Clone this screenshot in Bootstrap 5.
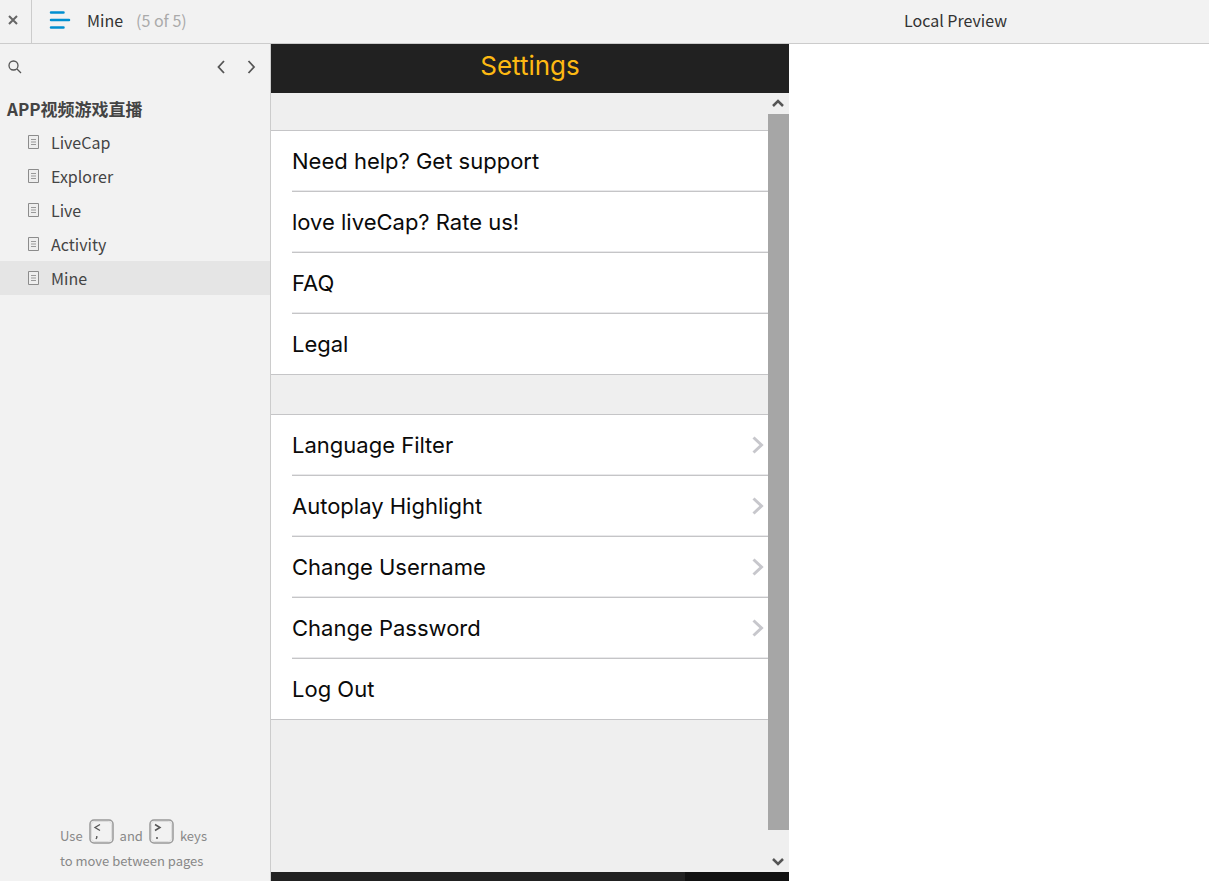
<!DOCTYPE html>
<html lang="en">
<head>
<meta charset="utf-8">
<meta name="viewport" content="width=device-width, initial-scale=1">
<title>Mine</title>
<link href="https://cdn.jsdelivr.net/npm/bootstrap@5.3.0/dist/css/bootstrap.min.css" rel="stylesheet">
<style>
  body { font-family: "Noto Sans CJK SC", sans-serif; font-size: 16px; line-height: 24px; color: #444; background: #fff; }
  svg { display: block; fill: none; }
  button { border: 0; background: none; padding: 0; color: inherit; }
  .topbar { height: 44px; background: #f2f2f2; border-bottom: 1px solid #ccc; padding-bottom: 3px; }
  .close-btn { width: 32px; height: 43px; padding: 0 0 3px 8px; border-right: 1px solid #ccc; color: #666; }
  .page-title { color: #333; padding-left: 15px; }
  .page-count { color: #aaa; margin-left: 13px; }
  .preview-label { color: #333; margin-right: 202px; }
  .sidebar { width: 271px; background: #f2f2f2; border-right: 1px solid #ccc; }
  .sidebar-tools { height: 45px; padding: 0 12px 0 8px; color: #555; }
  .project-name { font-size: 17px; font-weight: 700; line-height: 32px; padding: 4px 0 0 7px; }
  .page-link-row { height: 34px; padding-left: 28px; gap: 12px; color: #444; text-decoration: none; }
  .page-link-row.active { background: #e5e5e5; }
  .hint { font-size: 13px; line-height: 25px; color: #888; padding: 0 0 8px 60px; }
  .key-cap { width: 25px; height: 25px; margin: 0 6px; color: #555; }
  .phone { width: 518px; font-family: Inter, sans-serif; background: #efefef; }
  .phone-head { height: 49px; background: #212121; color: #fdb913; font-size: 26px; line-height: 44px; }
  .phone-foot { height: 9px; background: #212121; }
  .foot-tab { width: 104px; background: #111; }
  .settings-group { background: #fff; border-top: 1px solid #c5c5c7; border-bottom: 1px solid #c5c5c7; color: #0a0a0a; font-size: 22px; line-height: 28px; padding-left: 21px; }
  .settings-row { height: 61px; padding-right: 4px; text-align: left; border-bottom: 1px solid #c5c5c7; box-shadow: inset 0 -1px #e9e9eb; color: inherit; }
  .settings-row:last-child { height: 60px; border-bottom: 0; box-shadow: none; }
  .group-first { margin-top: 37px; }
  .group-next { margin-top: 39px; }
  .scroll-track { width: 21px; background: #efefef; }
  .scroll-end { height: 21px; padding-right: 2px; }
  .scroll-thumb { background: #a6a6a6; margin-bottom: 21px; }
</style>
</head>
<body class="d-flex flex-column vh-100 overflow-hidden">
<svg class="d-none" aria-hidden="true">
  <symbol id="doc" viewBox="0 0 11 14"><path d="M.5.5h10v13H.5z" fill="#eee" stroke="#8c8c8c"/><path d="M3 4.500h5M3 7h5M3 9.500h5" stroke="#999"/></symbol>
  <symbol id="chev" viewBox="0 0 12 18"><path d="M1.500 1.500 9.500 9l-8 7.500" stroke="#c7c7cc" stroke-width="3"/></symbol>
</svg>
<header class="topbar d-flex flex-shrink-0">
  <button class="close-btn d-flex align-items-center" aria-label="Close"><svg width="10" height="10" stroke="currentColor" stroke-width="2"><path d="M1 1l8 8M9 1 1 9"/></svg></button>
  <button class="d-flex align-items-center ms-3" aria-label="Pages"><svg width="24" height="20" stroke="#008fd0" stroke-width="2.500" stroke-linecap="round"><path d="M3 2.500h12.500M3 10h18M3 17.500h12.500"/></svg></button>
  <span class="page-title align-self-center">Mine</span>
  <span class="page-count align-self-center">(5 of 5)</span>
  <span class="preview-label align-self-center ms-auto">Local Preview</span>
</header>
<div class="d-flex flex-grow-1 overflow-hidden">
  <aside class="sidebar d-flex flex-column flex-shrink-0">
    <div class="sidebar-tools d-flex align-items-center">
      <button aria-label="Search"><svg width="14" height="14" stroke="currentColor" stroke-width="1.300"><circle cx="5.500" cy="5.500" r="4.500"/><path d="M9 9l4 4"/></svg></button>
      <button class="ms-auto" aria-label="Previous page"><svg width="14" height="14" stroke="currentColor" stroke-width="1.800"><path d="M10 1 4.500 7l5.500 6"/></svg></button>
      <button class="ms-3" aria-label="Next page"><svg width="14" height="14" stroke="currentColor" stroke-width="1.800"><path d="M4.500 1l5.500 6-5.500 6"/></svg></button>
    </div>
    <div class="project-name">APP视频游戏直播</div>
    <nav class="d-flex flex-column">
      <a class="page-link-row d-flex align-items-center" href="#"><svg width="11" height="14"><use href="#doc"/></svg>LiveCap</a>
      <a class="page-link-row d-flex align-items-center" href="#"><svg width="11" height="14"><use href="#doc"/></svg>Explorer</a>
      <a class="page-link-row d-flex align-items-center" href="#"><svg width="11" height="14"><use href="#doc"/></svg>Live</a>
      <a class="page-link-row d-flex align-items-center" href="#"><svg width="11" height="14"><use href="#doc"/></svg>Activity</a>
      <a class="page-link-row active d-flex align-items-center" href="#"><svg width="11" height="14"><use href="#doc"/></svg>Mine</a>
    </nav>
    <div class="hint mt-auto">
      <div class="d-flex align-items-end">
        <span>Use</span>
        <svg class="key-cap mb-1" viewBox="0 0 25 25"><rect x="1" y="1" width="23" height="23" rx="4" stroke="#999" stroke-width="1.500"/><rect x="2.500" y="2.500" width="20" height="20" rx="3" stroke="#ddd"/><path d="M11 5.500 6 8.500l5 3M7.800 17v1.500L7 20" stroke="currentColor" stroke-width="1.300"/></svg>
        <span>and</span>
        <svg class="key-cap mb-1" viewBox="0 0 25 25"><rect x="1" y="1" width="23" height="23" rx="4" stroke="#999" stroke-width="1.500"/><rect x="2.500" y="2.500" width="20" height="20" rx="3" stroke="#ddd"/><path d="M6 5.500l5 3-5 3M7 19h2" stroke="currentColor" stroke-width="1.500"/></svg>
        <span>keys</span>
      </div>
      <div>to move between pages</div>
    </div>
  </aside>
  <main class="phone d-flex flex-column flex-shrink-0">
    <h1 class="phone-head text-center fw-normal m-0">Settings</h1>
    <div class="d-flex flex-grow-1 overflow-hidden">
      <div class="flex-grow-1">
        <div class="settings-group group-first d-flex flex-column">
          <button class="settings-row">Need help? Get support</button>
          <button class="settings-row">love liveCap? Rate us!</button>
          <button class="settings-row">FAQ</button>
          <button class="settings-row">Legal</button>
        </div>
        <div class="settings-group group-next d-flex flex-column">
          <button class="settings-row d-flex align-items-center justify-content-between">Language Filter<svg width="12" height="18"><use href="#chev"/></svg></button>
          <button class="settings-row d-flex align-items-center justify-content-between">Autoplay Highlight<svg width="12" height="18"><use href="#chev"/></svg></button>
          <button class="settings-row d-flex align-items-center justify-content-between">Change Username<svg width="12" height="18"><use href="#chev"/></svg></button>
          <button class="settings-row d-flex align-items-center justify-content-between">Change Password<svg width="12" height="18"><use href="#chev"/></svg></button>
          <button class="settings-row">Log Out</button>
        </div>
      </div>
      <div class="scroll-track d-flex flex-column flex-shrink-0">
        <button class="scroll-end d-flex align-items-center justify-content-center" aria-label="Scroll up"><svg width="12" height="9" stroke="#555" stroke-width="2.500"><path d="M1 7 6 2l5 5"/></svg></button>
        <div class="scroll-thumb flex-grow-1"></div>
        <button class="scroll-end d-flex align-items-center justify-content-center" aria-label="Scroll down"><svg width="12" height="9" stroke="#555" stroke-width="2.500"><path d="M1 2l5 5 5-5"/></svg></button>
      </div>
    </div>
    <div class="phone-foot d-flex justify-content-end"><div class="foot-tab"></div></div>
  </main>
</div>
<script src="https://cdn.jsdelivr.net/npm/bootstrap@5.3.0/dist/js/bootstrap.bundle.min.js"></script>
</body>
</html>
